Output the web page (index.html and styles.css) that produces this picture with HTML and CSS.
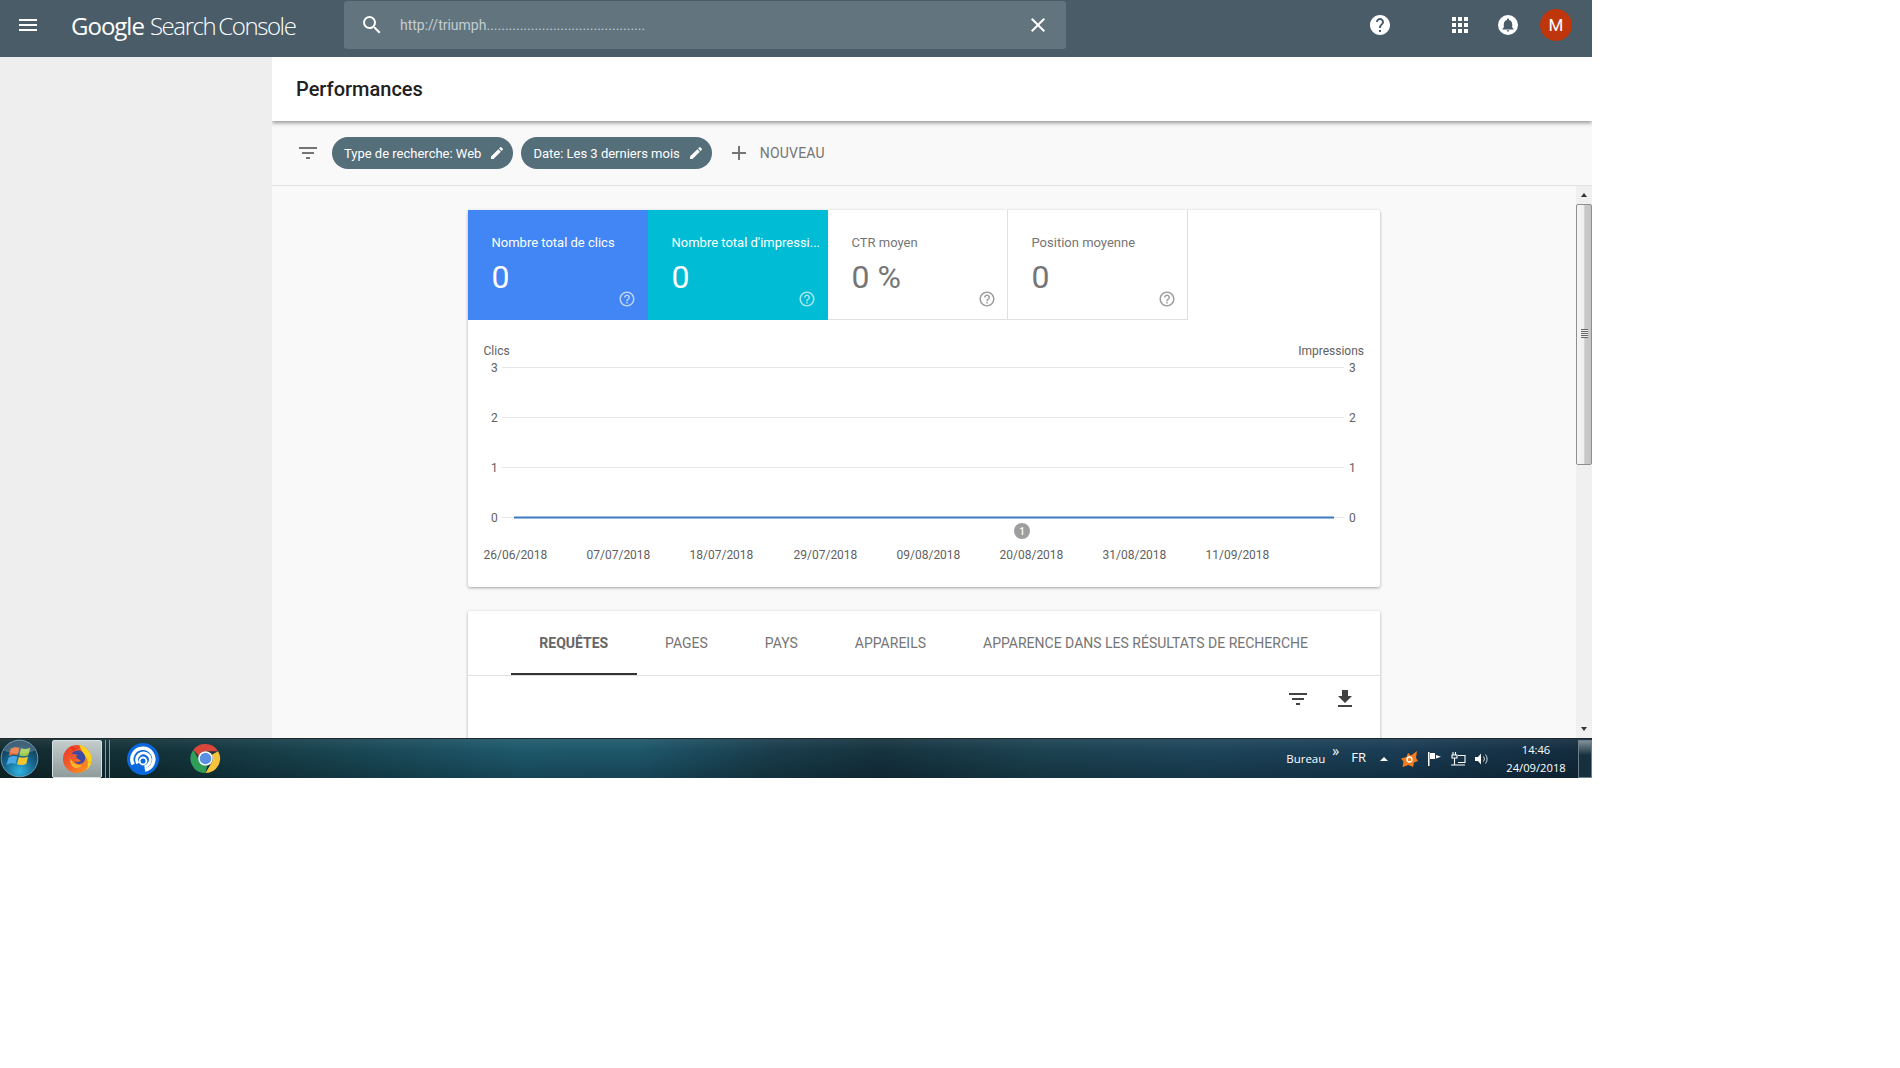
FILE: index.html
```html
<!DOCTYPE html>
<html lang="fr">
<head>
<meta charset="utf-8">
<title>Performances - Google Search Console</title>
<link rel="stylesheet" href="styles.css">
</head>
<body>
<div class="frame">
  <header class="topbar">
    <svg class="menu" viewBox="0 0 24 24" width="24" height="24"><path d="M3 18h18v-2H3v2zm0-5h18v-2H3v2zm0-7v2h18V6H3z"/></svg>
    <div class="logo"><span class="logo-g">Google</span><span class="logo-sc">Search Console</span></div>
    <div class="search">
      <svg viewBox="0 0 24 24" width="24" height="24"><path d="M15.5 14h-.79l-.28-.27A6.47 6.47 0 0 0 16 9.5 6.5 6.5 0 1 0 9.5 16c1.61 0 3.09-.59 4.23-1.57l.27.28v.79l5 4.99L20.49 19l-4.99-5zm-6 0C7.01 14 5 11.99 5 9.5S7.01 5 9.5 5 14 7.01 14 9.5 11.99 14 9.5 14z"/></svg>
      <span class="search-text">http://triumph...........................................</span>
      <svg class="search-x" viewBox="0 0 24 24" width="24" height="24"><path d="M19 6.41 17.59 5 12 10.59 6.41 5 5 6.41 10.59 12 5 17.59 6.41 19 12 13.41 17.59 19 19 17.59 13.41 12z"/></svg>
    </div>
    <div class="top-actions">
      <svg class="act-help" viewBox="0 0 24 24" width="24" height="24"><path d="M12 2C6.48 2 2 6.48 2 12s4.48 10 10 10 10-4.48 10-10S17.52 2 12 2zm1 17h-2v-2h2v2zm2.07-7.75-.9.92C13.45 12.9 13 13.5 13 15h-2v-.5c0-1.1.45-2.1 1.17-2.83l1.24-1.26c.37-.36.59-.86.59-1.41 0-1.1-.9-2-2-2s-2 .9-2 2H8c0-2.21 1.79-4 4-4s4 1.79 4 4c0 .88-.36 1.68-.93 2.25z"/></svg>
      <svg class="act-grid" viewBox="0 0 24 24" width="24" height="24"><path d="M4 8h4V4H4v4zm6 12h4v-4h-4v4zm-6 0h4v-4H4v4zm0-6h4v-4H4v4zm6 0h4v-4h-4v4zm6-10v4h4V4h-4zm-6 4h4V4h-4v4zm6 6h4v-4h-4v4zm0 6h4v-4h-4v4z"/></svg>
      <svg class="act-bell" viewBox="0 0 24 24" width="24" height="24"><path fill-rule="evenodd" d="M12 2a10 10 0 1 0 0 20 10 10 0 0 0 0-20zm0 3.4c.6 0 1 .4 1 1v.5c2 .5 3.2 2.200 3.200 4.300v3.300l1.300 1.300v.7h-11v-.7l1.300-1.300v-3.300c0-2.100 1.200-3.800 3.200-4.300v-.5c0-.6.4-1 1-1zM10.700 17.200h2.600c0 .7-.6 1.300-1.300 1.300s-1.300-.6-1.300-1.300z"/></svg>
      <div class="avatar">M</div>
    </div>
  </header>

  <div class="main">
    <aside class="sidebar"></aside>
    <section class="content">
      <div class="title-bar"><h1>Performances</h1></div>
      <div class="filter-bar">
        <svg class="filter-icon" viewBox="0 0 24 24" width="24" height="24"><path d="M10 18h4v-2h-4v2zM3 6v2h18V6H3zm3 7h12v-2H6v2z"/></svg>
        <div class="chip">Type de recherche: Web
          <svg viewBox="0 0 24 24" width="16" height="16"><path d="M3 17.25V21h3.750L17.810 9.940l-3.750-3.750L3 17.250zM20.710 7.040a1 1 0 0 0 0-1.410l-2.340-2.340a1 1 0 0 0-1.410 0l-1.830 1.830 3.750 3.750 1.830-1.830z"/></svg>
        </div>
        <div class="chip">Date: Les 3 derniers mois
          <svg viewBox="0 0 24 24" width="16" height="16"><path d="M3 17.25V21h3.750L17.810 9.940l-3.750-3.750L3 17.250zM20.710 7.040a1 1 0 0 0 0-1.410l-2.340-2.340a1 1 0 0 0-1.410 0l-1.830 1.830 3.750 3.750 1.830-1.830z"/></svg>
        </div>
        <div class="new-btn">
          <svg viewBox="0 0 24 24" width="24" height="24"><path d="M19 13h-6v6h-2v-6H5v-2h6V5h2v6h6v2z"/></svg>
          <span class="new-label">NOUVEAU</span>
        </div>
      </div>
      <div class="pane">
        <div class="scroller">
          <div class="card">
            <div class="tiles">
              <div class="tile tile-blue"><div class="tile-label">Nombre total de clics</div><div class="tile-value">0</div>
                <svg class="tile-help" viewBox="0 0 24 24" width="18" height="18"><path d="M11 18h2v-2h-2v2zm1-16C6.480 2 2 6.480 2 12s4.480 10 10 10 10-4.480 10-10S17.520 2 12 2zm0 18c-4.410 0-8-3.590-8-8s3.590-8 8-8 8 3.590 8 8-3.590 8-8 8zm0-14c-2.210 0-4 1.790-4 4h2c0-1.100.9-2 2-2s2 .9 2 2c0 2-3 1.750-3 5h2c0-2.250 3-2.500 3-5 0-2.210-1.790-4-4-4z"/></svg></div>
              <div class="tile tile-teal"><div class="tile-label">Nombre total d'impressi...</div><div class="tile-value">0</div>
                <svg class="tile-help" viewBox="0 0 24 24" width="18" height="18"><path d="M11 18h2v-2h-2v2zm1-16C6.480 2 2 6.480 2 12s4.480 10 10 10 10-4.480 10-10S17.520 2 12 2zm0 18c-4.410 0-8-3.590-8-8s3.590-8 8-8 8 3.590 8 8-3.590 8-8 8zm0-14c-2.210 0-4 1.790-4 4h2c0-1.100.9-2 2-2s2 .9 2 2c0 2-3 1.750-3 5h2c0-2.250 3-2.500 3-5 0-2.210-1.790-4-4-4z"/></svg></div>
              <div class="tile tile-plain"><div class="tile-label">CTR moyen</div><div class="tile-value">0 %</div>
                <svg class="tile-help" viewBox="0 0 24 24" width="18" height="18"><path d="M11 18h2v-2h-2v2zm1-16C6.480 2 2 6.480 2 12s4.480 10 10 10 10-4.480 10-10S17.520 2 12 2zm0 18c-4.410 0-8-3.590-8-8s3.590-8 8-8 8 3.590 8 8-3.590 8-8 8zm0-14c-2.210 0-4 1.790-4 4h2c0-1.100.9-2 2-2s2 .9 2 2c0 2-3 1.750-3 5h2c0-2.250 3-2.500 3-5 0-2.210-1.790-4-4-4z"/></svg></div>
              <div class="tile tile-plain"><div class="tile-label">Position moyenne</div><div class="tile-value">0</div>
                <svg class="tile-help" viewBox="0 0 24 24" width="18" height="18"><path d="M11 18h2v-2h-2v2zm1-16C6.480 2 2 6.480 2 12s4.480 10 10 10 10-4.480 10-10S17.520 2 12 2zm0 18c-4.410 0-8-3.590-8-8s3.590-8 8-8 8 3.590 8 8-3.590 8-8 8zm0-14c-2.210 0-4 1.790-4 4h2c0-1.100.9-2 2-2s2 .9 2 2c0 2-3 1.750-3 5h2c0-2.250 3-2.500 3-5 0-2.210-1.790-4-4-4z"/></svg></div>
            </div>
            <svg class="chart" viewBox="0 0 912 267" width="912" height="267">
              <g class="grid">
                <line x1="34" x2="876" y1="47.500" y2="47.500"/>
                <line x1="34" x2="876" y1="97.500" y2="97.500"/>
                <line x1="34" x2="876" y1="147.500" y2="147.500"/>
                <line x1="34" x2="876" y1="197.500" y2="197.500"/>
              </g>
              <line class="series" x1="46" x2="866" y1="197.500" y2="197.500"/>
              <circle class="badge" cx="554" cy="211" r="8"/>
              <text class="badge-t" x="554" y="214.500">1</text>
              <text class="ax" x="15.500" y="35">Clics</text>
              <text class="ax end" x="896" y="35">Impressions</text>
              <text class="ax" x="23" y="51.500">3</text><text class="ax" x="23" y="101.500">2</text><text class="ax" x="23" y="151.500">1</text><text class="ax" x="23" y="201.500">0</text>
              <text class="ax" x="881" y="51.500">3</text><text class="ax" x="881" y="101.500">2</text><text class="ax" x="881" y="151.500">1</text><text class="ax" x="881" y="201.500">0</text>
              <text class="ax" x="15.500" y="239">26/06/2018</text>
              <text class="ax" x="118.500" y="239">07/07/2018</text>
              <text class="ax" x="221.500" y="239">18/07/2018</text>
              <text class="ax" x="325.500" y="239">29/07/2018</text>
              <text class="ax" x="428.500" y="239">09/08/2018</text>
              <text class="ax" x="531.500" y="239">20/08/2018</text>
              <text class="ax" x="634.500" y="239">31/08/2018</text>
              <text class="ax" x="737.500" y="239">11/09/2018</text>
            </svg>
          </div>
          <div class="card card-table">
            <nav class="tabs">
              <div class="tab tab-active">REQUÊTES</div>
              <div class="tab">PAGES</div>
              <div class="tab">PAYS</div>
              <div class="tab">APPAREILS</div>
              <div class="tab">APPARENCE DANS LES RÉSULTATS DE RECHERCHE</div>
            </nav>
            <div class="table-tools">
              <svg viewBox="0 0 24 24" width="24" height="24"><path d="M10 18h4v-2h-4v2zM3 6v2h18V6H3zm3 7h12v-2H6v2z"/></svg>
              <svg viewBox="0 0 24 24" width="24" height="24"><path d="M19 9h-4V3H9v6H5l7 7 7-7zM5 18v2h14v-2H5z"/></svg>
            </div>
          </div>
        </div>
        <div class="scrollbar">
          <div class="sb-btn"><span class="arrow-up"></span></div>
          <div class="sb-track">
            <div class="sb-thumb"><span class="grip"></span></div>
          </div>
          <div class="sb-btn"><span class="arrow-down"></span></div>
        </div>
      </div>
    </section>
  </div>

  <footer class="taskbar">
    <svg class="orb" viewBox="0 0 40 40" width="39" height="39">
      <defs>
        <radialGradient id="orbfill" cx="50%" cy="85%" r="75%">
          <stop offset="0" stop-color="#2fb4e0"/><stop offset=".55" stop-color="#17688f"/><stop offset="1" stop-color="#123a55"/>
        </radialGradient>
      </defs>
      <circle cx="20" cy="20" r="18.800" fill="url(#orbfill)" stroke="#6f9fb5"/>
      <path d="M11 10c3-2 6-2 9-1l-1.800 7.500c-3-1-6-1-9.200 1z" fill="#ef6a2e"/>
      <path d="M21.500 9.500c3 1 6 1 9.500-.5l-1.800 7.500c-3 1.500-6.200 1.500-9.500.5z" fill="#9ccb4a"/>
      <path d="M8.800 19c3-2 6-2 9-1l-1.800 7.500c-3-1-6-1-9.200 1z" fill="#4aa8e4"/>
      <path d="M19.300 18.500c3 1 6 1 9.500-.5l-1.800 7.500c-3 1.500-6.200 1.500-9.500.5z" fill="#f6c62c"/>
      <path d="M20 1.500a18.500 18.500 0 0 1 16.500 10.300C28 16 12 16 3.500 11.800A18.500 18.500 0 0 1 20 1.500z" fill="#fff" opacity=".2"/>
    </svg>
    <div class="tb-active">
      <svg viewBox="0 0 32 32" width="31" height="31">
        <defs>
          <linearGradient id="foxbody" x1="0" y1="0" x2="1" y2="1">
            <stop offset="0" stop-color="#e8352c"/><stop offset=".5" stop-color="#f4612a"/><stop offset="1" stop-color="#ffa41c"/>
          </linearGradient>
        </defs>
        <circle cx="15.500" cy="16.500" r="14.500" fill="url(#foxbody)"/>
        <path d="M18 1.500c7 2.500 12.500 8 12.500 15 0 5-2 9-5.500 11.500 2-3 2.500-7 1-11-1.500-4.500-7-8.500-8-15.500z" fill="#ffd21f"/>
        <path d="M10 11c2-3 6-4 9-3 3 1.500 5 4 5 7.500 0 3-2 5.500-5 6-2.500.5-5-.5-6-2.500 2 .8 5 .8 6.500-1-2-1-4-1.500-5-3.500.5-1 1-1.500 2-1.500-1.500-1.500-4-1.500-6.500-2z" fill="#3c4ba5"/>
        <path d="M9 16c2 5 7 8 12 6.500-2 3-6 4-9 2.500-3-1.500-4-5.500-3-9z" fill="#ffb52a"/>
        <path d="M9 3.500c2-.5 3 .5 3.500 2 2-1 4-1.500 6-1-3 .5-5 2-6 4-2-.5-3.500-2.500-3.500-5z" fill="#e9331f"/>
      </svg>
    </div>
    <div class="tb-divider"></div>
    <svg class="tb-uplay" viewBox="0 0 32 32" width="32" height="32">
      <circle cx="16" cy="16" r="16" fill="#0b67dc"/>
      <g fill="none" stroke="#fff">
        <path d="M6.200 21.500A11 11 0 1 1 26 20.500 11 11 0 0 1 18 27" stroke-width="3.400"/>
        <path d="M10.800 20.500A6.800 6.800 0 1 1 21.800 21 7 7 0 0 1 17.500 24" stroke-width="3"/>
      </g>
      <circle cx="16" cy="18" r="4.400" fill="#fff"/>
      <circle cx="16" cy="18" r="2.500" fill="#0b67dc"/>
    </svg>
    <svg class="tb-chrome" viewBox="0 0 32 32" width="31" height="31">
      <path d="M16 1a15 15 0 0 1 13 7.500H16a7.500 7.500 0 0 0-7 5L3.500 7A15 15 0 0 1 16 1z" fill="#d9473a"/>
      <path d="M29 8.500A15 15 0 0 1 16 31l6.500-11.200A7.500 7.500 0 0 0 22.500 12z" fill="#f7c23c"/>
      <path d="M16 31A15 15 0 0 1 3.500 7L9.800 18.500a7.500 7.500 0 0 0 8 4.800z" fill="#2f9e57"/>
      <circle cx="16" cy="16" r="7.500" fill="#fff"/>
      <circle cx="16" cy="16" r="6" fill="#5a8fe6"/>
    </svg>
    <div class="tray">
      <span class="tray-bureau">Bureau</span>
      <span class="tray-chev">»</span>
      <span class="tray-lang">FR</span>
      <span class="tray-up"></span>
      <svg class="tray-avast" viewBox="0 0 18 18" width="18" height="18"><path d="M1 8.500 6.500 7 8 3l3 2.500L17 1l-1 7 2 3-4 1.500-1 4.500-4.500-2-6 2 1-5.500z" fill="#f47b1f"/><circle cx="9.500" cy="9.500" r="2.500" fill="none" stroke="#fff" stroke-width="1.300"/></svg>
      <svg class="tray-icon" viewBox="0 0 16 16" width="16" height="16"><path d="M2 1h1.500v14H2zM4 2h5v6H4zM10 4l5 1.800L10 7.500z" fill="#fff"/></svg>
      <svg class="tray-icon" viewBox="0 0 16 16" width="16" height="16"><path d="M3 1v3M5.500 1v3M2 4h5v3H2zM4.500 7v7M1 14h14M8 4.500h7v7H8" fill="none" stroke="#fff" stroke-width="1.100"/></svg>
      <svg class="tray-icon" viewBox="0 0 16 16" width="16" height="16"><path d="M1 6h3l3-3.500v11L4 10H1z" fill="#fff"/><path d="M9.500 5.500a4 4 0 0 1 0 5M11.500 3.500a7 7 0 0 1 0 9" fill="none" stroke="#cfd8dc" stroke-width="1"/></svg>
      <div class="clock"><span>14:46</span><span>24/09/2018</span></div>
      <div class="show-desktop"></div>
    </div>
  </footer>
</div>
</body>
</html>
```
FILE: styles.css
```css
* { box-sizing: border-box; }
html, body { margin: 0; padding: 0; background: #fff; }
body { font-family: Roboto, "Liberation Sans", sans-serif; color: #5f6368; overflow: hidden; }
svg { display: block; flex: none; }

.frame { width: 1592px; height: 778px; display: flex; flex-direction: column; overflow: hidden; }

/* top bar */
.topbar { height: 57px; flex: none; background: #4a5c68; display: flex; align-items: flex-start; color: #fff; position: relative; z-index: 1; }
.topbar svg { fill: #fff; }
.menu { margin: 13px 0 0 16px; }
.logo { margin: 10px 0 0 31px; width: 273px; font-family: "Open Sans", sans-serif; font-size: 24px; line-height: 32px; white-space: nowrap; }
.logo-g { letter-spacing: -1px; margin-right: 6px; }
.logo-sc { font-weight: 300; letter-spacing: -1.4px; word-spacing: -2px; }
.search { margin-top: 1px; width: 722px; height: 48px; background: #62747d; border-radius: 3px; display: flex; align-items: center; padding: 0 16px 0 16px; }
.search-text { margin-left: 16px; font-size: 14px; color: #c3ced4; flex: 1; white-space: nowrap; }
.top-actions { flex: 1; display: flex; align-items: center; height: 50px; }
.act-help { margin-left: 302px; }
.act-grid { margin-left: 56px; }
.act-bell { margin-left: 24px; }
.avatar { margin-left: 20px; width: 32px; height: 32px; border-radius: 50%; background: #bf360c; color: #fff; font-size: 17px; display: flex; align-items: center; justify-content: center; }

/* layout */
.main { flex: 1; min-height: 0; display: flex; }
.sidebar { width: 272px; flex: none; background: #eee; }
.content { flex: 1; min-width: 0; display: flex; flex-direction: column; background: #f9f9f9; }
.title-bar { height: 64px; flex: none; background: #fff; box-shadow: 0 2px 4px rgba(0,0,0,.4); display: flex; align-items: center; padding-left: 24px; position: relative; clip-path: inset(0 0 -8px 0); }
h1 { margin: 0; font-size: 20px; font-weight: 500; color: #212121; }
.filter-bar { height: 65px; flex: none; border-bottom: 1px solid #e0e0e0; display: flex; align-items: center; padding-left: 24px; padding-bottom: 1px; }
.filter-icon { fill: #757575; }
.chip { margin-left: 12px; height: 32px; border-radius: 16px; background: #546e7a; color: #fff; font-size: 13px; display: flex; align-items: center; gap: 8px; padding: 1px 8px 0 12px; white-space: nowrap; }
.chip svg { fill: #fff; margin-top: -1px; }
.chip + .chip { margin-left: 8px; }
.new-btn { margin-left: 15px; display: flex; align-items: center; gap: 9px; color: #757575; font-size: 14px; }
.new-btn svg { fill: #757575; }
.new-label { padding-top: 1px; letter-spacing: .2px; }

.pane { flex: 1; min-height: 0; display: flex; }
.scroller { flex: 1; min-width: 0; overflow: hidden; padding-top: 24px; }
.card { width: 912px; margin: 0 auto; background: #fff; box-shadow: 0 1px 3px rgba(0,0,0,.35); border-radius: 2px; }
.card-table { margin-top: 24px; height: 260px; }

.tiles { display: flex; height: 110px; }
.tile { width: 180px; height: 110px; padding: 24px 4px 0 23.500px; position: relative; }
.tile-blue { background: #4285f4; color: #fff; }
.tile-teal { background: #00bcd4; color: #fff; }
.tile-plain { border-right: 1px solid #e0e0e0; border-bottom: 1px solid #e0e0e0; color: #757575; }
.tile-label { font-size: 13px; line-height: 17px; white-space: nowrap; }
.tile-value { margin-top: 7px; font-size: 32px; line-height: 38px; }
.tile-help { position: absolute; right: 12.500px; bottom: 12px; fill: rgba(255,255,255,.65); }
.tile-plain .tile-help { fill: #9e9e9e; right: 11.500px; bottom: 11px; }

.grid line { stroke: #e6e6e6; stroke-width: 1; }
.series { stroke: #3b78bd; stroke-width: 2; }
.badge { fill: #9e9e9e; }
.badge-t { fill: #fff; font: 500 10px Roboto, sans-serif; text-anchor: middle; }
.ax { font: 12px Roboto, sans-serif; fill: #616161; }
.ax.end { text-anchor: end; }

.tabs { display: flex; height: 65px; padding-left: 43px; border-bottom: 1px solid #e0e0e0; }
.tab { padding: 0 28.500px; height: 64px; display: flex; align-items: center; font-size: 14px; color: #757575; white-space: nowrap; }
.tab-active { font-weight: 700; color: #666; padding: 0 28.300px; box-shadow: inset 0 -2px 0 #333; }
.table-tools { display: flex; justify-content: flex-end; gap: 23px; padding: 11px 23px 0 0; }
.table-tools svg { fill: #424242; }

/* scrollbar */
.scrollbar { width: 16px; flex: none; display: flex; flex-direction: column; background: #f0f0f0; }
.sb-btn { height: 18px; flex: none; display: flex; align-items: center; justify-content: center; }
.arrow-up { border: 3.500px solid transparent; border-top: 0; border-bottom: 4px solid #333; }
.arrow-down { border: 3.500px solid transparent; border-bottom: 0; border-top: 4px solid #333; }
.sb-track { flex: 1; }
.sb-thumb { height: 261px; border: 1px solid #8f8f8f; border-radius: 2px; background: linear-gradient(90deg, #f5f5f5 0, #eee 50%, #c9c9c9 55%, #c4c4c4 100%); display: flex; align-items: center; justify-content: center; }
.grip { width: 7px; height: 9px; margin-bottom: 2px; background: repeating-linear-gradient(180deg, #666 0, #666 1px, #eee 1px, #eee 2px); }

/* taskbar */
.taskbar { height: 40px; flex: none; border-top: 1px solid #20282c; display: flex; align-items: center; color: #fff; font-family: "Open Sans", "Liberation Sans", sans-serif; font-size: 11.200px;
  background: linear-gradient(180deg, rgba(255,255,255,.08) 0, rgba(255,255,255,.01) 30%, rgba(0,0,0,.2) 100%),
    linear-gradient(90deg, #10282d 0, #11323a 180px, #164350 340px, #1b5669 520px, #1b5468 640px, #173b4a 770px, #13303d 880px, #19404f 1040px, #1a4257 1200px, #173a52 1400px, #10283a 1592px); }
.tb-active { margin-left: 13px; width: 50px; height: 38px; border: 1px solid #d8e0e0; border-radius: 2px; background: linear-gradient(180deg, #c4cccc, #8f9c9c); display: flex; align-items: center; justify-content: center; }
.tb-divider { margin-left: 3px; width: 5px; height: 38px; border-left: 1px solid #8a9a9e; border-right: 1px solid #8a9a9e; }
.tb-uplay { margin-left: 17px; }
.tb-chrome { margin-left: 31px; }
.tray { margin-left: auto; display: flex; align-items: center; height: 100%; }
.tray-bureau { margin-right: 7px; font-size: 11.500px; }
.tray-chev { margin: -16px 12px 0 0; font-size: 14px; line-height: 14px; }
.tray-lang { margin: -4px 14px 0 0; font-size: 13px; }
.tray-up { margin-right: 12px; border: 4px solid transparent; border-top: 0; border-bottom: 4px solid #fff; }
.tray-avast { margin-right: 8px; }
.tray-icon { margin-right: 8px; }
.clock { margin: 1px 0 0 3px; width: 70px; display: flex; flex-direction: column; align-items: center; line-height: 18px; }
.show-desktop { margin-left: 7px; width: 14px; height: 38px; border: 1px solid #6e7f88; background: linear-gradient(180deg, #7f8f98, #16303f 40%); }
```
